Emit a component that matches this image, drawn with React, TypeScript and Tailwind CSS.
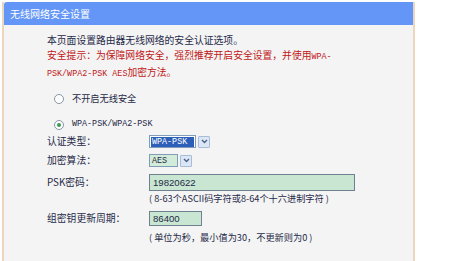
import React from 'react';

const cjk = { fontFamily: '"Noto Sans CJK SC", "Liberation Sans", sans-serif' };
const mono = { fontFamily: '"Liberation Mono", "Noto Sans CJK SC", monospace' };

function Radio({ checked }: { checked?: boolean }) {
  return (
    <span className="w-[10px] h-[10px] rounded-full border border-[#8796a6] bg-white flex items-center justify-center">
      {checked && <span className="w-[4px] h-[4px] rounded-full bg-[#3c9a55]" />}
    </span>
  );
}

function DropBtn() {
  return (
    <span className="w-[12px] h-[12px] ml-[2px] border border-[#a8bcd8] bg-[#dbe6f6] rounded-[1px] flex items-center justify-center">
      <svg width="7" height="5" viewBox="0 0 7 5">
        <path d="M1 1 L3.5 3.5 L6 1" stroke="#4d6185" strokeWidth="1.4" fill="none" />
      </svg>
    </span>
  );
}

function Row({ label, children }: { label: string; children: React.ReactNode }) {
  return (
    <div className="flex items-center">
      <span className="w-[102px] shrink-0">{label}</span>
      {children}
    </div>
  );
}

export default function App() {
  return (
    <div className="w-[450px] h-[261px] bg-white pt-[2px] pl-[2px] overflow-hidden" style={cjk}>
      <div className="w-[413px] h-[259px] flex flex-col border-l-2 border-r-2 border-[#ecd6bd] bg-[#f4f4f4]">
        <div className="h-[23px] bg-[#6396f7] rounded-tl-[3px] flex items-center pl-[6px] text-white text-[10px]">
          无线网络安全设置
        </div>
        <div className="flex-1 flex flex-col pl-[43px] text-[9.8px] text-[#1f2a48] leading-[15px] pt-[8px]">
          <div>本页面设置路由器无线网络的安全认证选项。</div>
          <div className="text-[#c01818]">
            安全提示：为保障网络安全，强烈推荐开启安全设置，并使用<span style={mono} className="text-[8.4px]">WPA-</span>
          </div>
          <div className="text-[#c01818]">
            <span style={mono} className="text-[8.4px]">PSK/WPA2-PSK AES</span>加密方法。
          </div>

          <div className="flex items-center gap-[8px] pl-[7px] mt-[9px] h-[15px]">
            <Radio />
            <span className="text-[9.2px]">不开启无线安全</span>
          </div>
          <div className="flex items-center gap-[8px] pl-[7px] mt-[11px] h-[15px]">
            <Radio checked />
            <span style={mono} className="text-[8.4px]">WPA-PSK/WPA2-PSK</span>
          </div>

          <div className="flex flex-col mt-[2px]">
            <Row label="认证类型：">
              <span className="flex items-center h-[14px]">
                <span className="h-[13px] w-[47px] border border-[#7f9db9] bg-white flex items-center px-[1px]">
                  <span style={mono} className="bg-[#2c5fb8] text-white text-[8.4px] leading-[10px] px-[1px] w-full">WPA-PSK</span>
                </span>
                <DropBtn />
              </span>
            </Row>
            <div className="mt-[4px]">
              <Row label="加密算法：">
                <span className="flex items-center h-[14px]">
                  <span className="h-[13px] w-[29px] border border-[#7f9db9] bg-[#d3ecd9] flex items-center px-[2px]">
                    <span style={mono} className="text-[8.4px] leading-[10px]">AES</span>
                  </span>
                  <DropBtn />
                </span>
              </Row>
            </div>
            <div className="mt-[6px]">
              <Row label="PSK密码：">
                <span className="h-[17px] w-[206px] border border-[#6f8090] bg-[#c9e6d2] flex items-center px-[3px] text-[9.6px]" style={{ fontFamily: '"Liberation Sans", sans-serif' }}>
                  19820622
                </span>
              </Row>
            </div>
            <div className="pl-[102px] mt-[0px] text-[9.2px]">
              ( 8-63个ASCII码字符或8-64个十六进制字符 )
            </div>
            <div className="mt-[5px]">
              <Row label="组密钥更新周期：">
                <span className="h-[15px] w-[53px] border border-[#6f8090] bg-[#c9e6d2] flex items-center px-[3px] text-[9.6px]" style={{ fontFamily: '"Liberation Sans", sans-serif' }}>
                  86400
                </span>
              </Row>
            </div>
            <div className="pl-[102px] mt-[4px] text-[9.2px]">
              ( 单位为秒，最小值为30，不更新则为0 )
            </div>
          </div>
        </div>
      </div>
    </div>
  );
}
